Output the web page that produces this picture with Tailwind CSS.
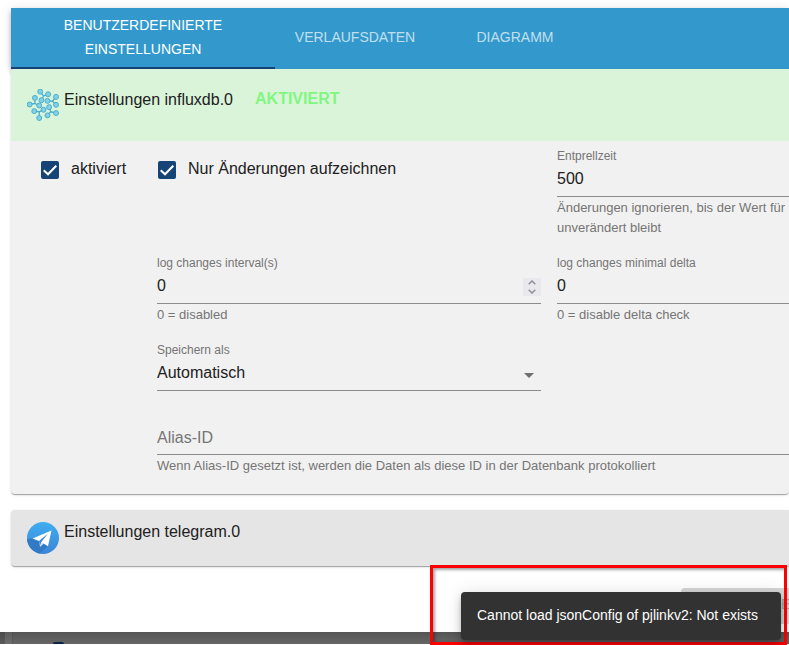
<!DOCTYPE html>
<html lang="de">
<head>
<meta charset="utf-8">
<meta name="viewport" content="width=device-width, initial-scale=1">
<title>Einstellungen</title>
<script src="https://cdn.jsdelivr.net/npm/@tailwindcss/browser@4"></script>
</head>
<body class="bg-white text-base leading-6 text-[#202020] font-['Liberation_Sans',Arial,sans-serif]">
<div class="relative overflow-hidden pb-px">
  <main class="pl-[11px] pt-2">
    <nav class="relative grid grid-cols-[264px_160px_160px] h-[61px] bg-[#3399cc] text-sm leading-6 text-white/70 shadow-[0_2px_4px_-1px_rgba(0,0,0,0.2),0_4px_5px_0_rgba(0,0,0,0.14),0_1px_10px_0_rgba(0,0,0,0.12)]" role="tablist">
      <button type="button" role="tab" aria-selected="true" class="border-b-2 border-[#164477] px-6 pb-0.5 text-white uppercase">Benutzerdefinierte Einstellungen</button>
      <button type="button" role="tab" aria-selected="false" class="pb-1 uppercase">Verlaufsdaten</button>
      <button type="button" role="tab" aria-selected="false" class="pb-1 uppercase">Diagramm</button>
    </nav>

    <section class="relative rounded bg-[#f1f1f1] shadow-[0_2px_1px_-1px_rgba(0,0,0,0.2),0_1px_1px_0_rgba(0,0,0,0.14),0_1px_3px_0_rgba(0,0,0,0.12)]">
      <header class="flex h-[72px] items-start rounded-tl bg-[#daf4da] pl-4">
        <svg class="mt-5 size-8 shrink-0" viewBox="35 27 97 97" fill="#86d0e6" stroke="#48aecb" stroke-width="3" aria-hidden="true">
          <g fill="none" stroke-width="4">
            <path d="M75 35L85 48L99 43M85 48L79 61"/>
            <path d="M59 54V71L43 74M59 71L72 77"/>
            <path d="M97 63L112 64L123 51M112 64L123 75"/>
            <path d="M85 90L72 96L57 94M72 96V115"/>
            <path d="M102 82L107 96L97 107M107 96L123 100"/>
          </g>
          <circle cx="75" cy="35" r="7.500"/><circle cx="99" cy="43" r="7.500"/><circle cx="79" cy="61" r="7.500"/>
          <circle cx="59" cy="54" r="7.500"/><circle cx="43" cy="74" r="7.500"/><circle cx="72" cy="77" r="7.500"/>
          <circle cx="97" cy="63" r="7.500"/><circle cx="123" cy="51" r="7.500"/><circle cx="123" cy="75" r="7.500"/>
          <circle cx="85" cy="90" r="7.500"/><circle cx="57" cy="94" r="7.500"/><circle cx="72" cy="115" r="7.500"/>
          <circle cx="102" cy="82" r="7.500"/><circle cx="97" cy="107" r="7.500"/><circle cx="123" cy="100" r="7.500"/>
        </svg>
        <h2 class="pl-[5px] pt-[19px]">Einstellungen influxdb.0</h2>
        <span class="pl-[22px] pt-[18px] font-bold text-[#80f780]">AKTIVIERT</span>
      </header>

      <form class="grid grid-cols-[100px_384px_minmax(384px,1fr)] gap-x-4 gap-y-[17px] pb-[18px] pl-[30px] pt-[7px]">
        <label class="flex items-start gap-3 pt-[9px]">
          <span class="mt-1 grid size-[18px] shrink-0">
            <input type="checkbox" checked class="col-start-1 row-start-1 size-[18px] appearance-none rounded-xs bg-[#164477]">
            <svg class="pointer-events-none col-start-1 row-start-1 size-[18px]" viewBox="0 0 18 18" fill="none" stroke="#fff" stroke-width="2" aria-hidden="true"><path d="M2.7 9.3L7 13.3L15.3 4.7"/></svg>
          </span>
          aktiviert
        </label>
        <label class="flex items-start gap-3 pl-px pt-[9px]">
          <span class="mt-1 grid size-[18px] shrink-0">
            <input type="checkbox" checked class="col-start-1 row-start-1 size-[18px] appearance-none rounded-xs bg-[#164477]">
            <svg class="pointer-events-none col-start-1 row-start-1 size-[18px]" viewBox="0 0 18 18" fill="none" stroke="#fff" stroke-width="2" aria-hidden="true"><path d="M2.7 9.3L7 13.3L15.3 4.7"/></svg>
          </span>
          Nur Änderungen aufzeichnen
        </label>
        <div>
          <label for="debounce" class="block text-xs leading-4 text-[#757575]">Entprellzeit</label>
          <input id="debounce" type="text" value="500" class="block h-[33px] w-full border-b border-[#8c8c8c] pb-0.5 outline-none">
          <p class="whitespace-nowrap pt-px text-[13px] leading-5 text-[#757575]">Änderungen ignorieren, bis der Wert für X<br>unverändert bleibt</p>
        </div>

        <div class="col-start-2">
          <label for="interval" class="block text-xs leading-4 text-[#757575]">log changes interval(s)</label>
          <div class="flex h-[33px] border-b border-[#8c8c8c]">
            <input id="interval" type="number" value="0" class="min-w-0 flex-1 pb-0.5 outline-none [appearance:textfield]">
            <div class="mt-[7px] flex h-[18px] w-[18px] flex-col bg-[#e8e8ed]">
              <button type="button" aria-label="Erhöhen" class="flex h-[9px] items-center justify-center"><svg class="h-[5px] w-2" viewBox="0 0 8 5" fill="none" stroke="#8f8f9d" stroke-width="1.5"><path d="M.7 4.3L4 1L7.3 4.3"/></svg></button>
              <button type="button" aria-label="Verringern" class="flex h-[9px] items-center justify-center"><svg class="h-[5px] w-2" viewBox="0 0 8 5" fill="none" stroke="#8f8f9d" stroke-width="1.5"><path d="M.7 .7L4 4L7.3 .7"/></svg></button>
            </div>
          </div>
          <p class="pt-px text-[13px] leading-5 text-[#757575]">0 = disabled</p>
        </div>
        <div>
          <label for="delta" class="block text-xs leading-4 text-[#757575]">log changes minimal delta</label>
          <input id="delta" type="text" value="0" class="block h-[33px] w-full border-b border-[#8c8c8c] pb-0.5 outline-none">
          <p class="pt-px text-[13px] leading-5 text-[#757575]">0 = disable delta check</p>
        </div>

        <div class="col-start-2">
          <label for="store" class="block text-xs leading-4 text-[#757575]">Speichern als</label>
          <div class="grid border-b border-[#8c8c8c]">
            <select id="store" class="col-start-1 row-start-1 h-8 appearance-none pb-0.5 outline-none"><option>Automatisch</option></select>
            <svg class="pointer-events-none col-start-1 row-start-1 mr-[7px] mt-[15px] h-[5px] w-[10px] justify-self-end" viewBox="0 0 10 5" fill="#6f6f6f" aria-hidden="true"><path d="M0 0H10L5 5Z"/></svg>
          </div>
        </div>

        <div class="col-span-2 col-start-2 pt-[14px]">
          <input type="text" aria-label="Alias-ID" placeholder="Alias-ID" class="block h-[33px] w-full border-b border-[#8c8c8c] outline-none placeholder:text-[#757575]">
          <p class="pt-px text-[13px] leading-5 text-[#757575]">Wenn Alias-ID gesetzt ist, werden die Daten als diese ID in der Datenbank protokolliert</p>
        </div>
      </form>
    </section>

    <section class="mt-4 flex h-14 items-start rounded-l bg-[#e5e5e5] pl-4 shadow-[0_2px_1px_-1px_rgba(0,0,0,0.2),0_1px_1px_0_rgba(0,0,0,0.14),0_1px_3px_0_rgba(0,0,0,0.12)]">
      <svg class="mt-3 size-8 shrink-0" viewBox="0 0 32 32" aria-hidden="true">
        <defs>
          <linearGradient id="sky" x1="0" y1="0" x2="0" y2="1"><stop offset="0" stop-color="#40adf0"/><stop offset="1" stop-color="#3b85d6"/></linearGradient>
          <clipPath id="disc"><circle cx="16" cy="16" r="16"/></clipPath>
        </defs>
        <circle cx="16" cy="16" r="16" fill="url(#sky)"/>
        <path clip-path="url(#disc)" d="M0 17L6 16.500L12 19L24 9L21 24L12 32H0Z" fill="#3279c6"/>
        <path d="M5.500 16.500L24.500 8.500L21 24.300L16.500 21.500L13 24.800L12 19Z" fill="#fff"/>
        <path d="M12 19L21 11.500L14.300 20L13 24.800Z" fill="#3c86cf"/>
        <path d="M14.300 20L16.500 21.500L13 24.800Z" fill="#d5e6f5"/>
      </svg>
      <h2 class="pl-[5px] pt-[10px]">Einstellungen telegram.0</h2>
    </section>

    <footer class="flex h-[66px] items-start pl-[670px] pt-[22px]">
      <button type="button" disabled class="flex h-9 shrink-0 items-center gap-2 rounded bg-[#d5d5d5] px-4 pb-1 text-sm text-[#a0a0a0] uppercase">
        <svg class="size-6" viewBox="0 0 24 24" fill="currentColor" aria-hidden="true"><path d="M17 3H5a2 2 0 0 0-2 2v14a2 2 0 0 0 2 2h14a2 2 0 0 0 2-2V7zM12 19a3 3 0 1 1 0-6 3 3 0 0 1 0 6zM15 9H5V5h10z"/></svg>
        Speichern
      </button>
    </footer>
  </main>

  <div class="flex h-3 bg-linear-to-b from-[#555555] to-[#666666]">
    <div class="w-[5px] bg-black/10"></div>
    <div class="w-2 border-r border-black/15 bg-white/5"></div>
    <div class="ml-10 mt-[10px] h-0.5 w-[11px] rounded-t bg-[#0c2340]"></div>
  </div>

  <div class="absolute bottom-0 right-0.5 h-20 w-[357px] border-[3px] border-[#ff0000] shadow-[inset_2px_2px_3px_rgba(0,0,0,0.35)]"></div>
  <div role="alert" class="absolute bottom-[5px] right-2 flex h-12 min-w-80 items-center rounded bg-[#323232] px-4 pb-0.5 text-sm text-white shadow-[0_3px_5px_-1px_rgba(0,0,0,0.2),0_6px_10px_0_rgba(0,0,0,0.14),0_1px_18px_0_rgba(0,0,0,0.12)]">Cannot load jsonConfig of pjlinkv2: Not exists</div>
</div>
</body>
</html>
